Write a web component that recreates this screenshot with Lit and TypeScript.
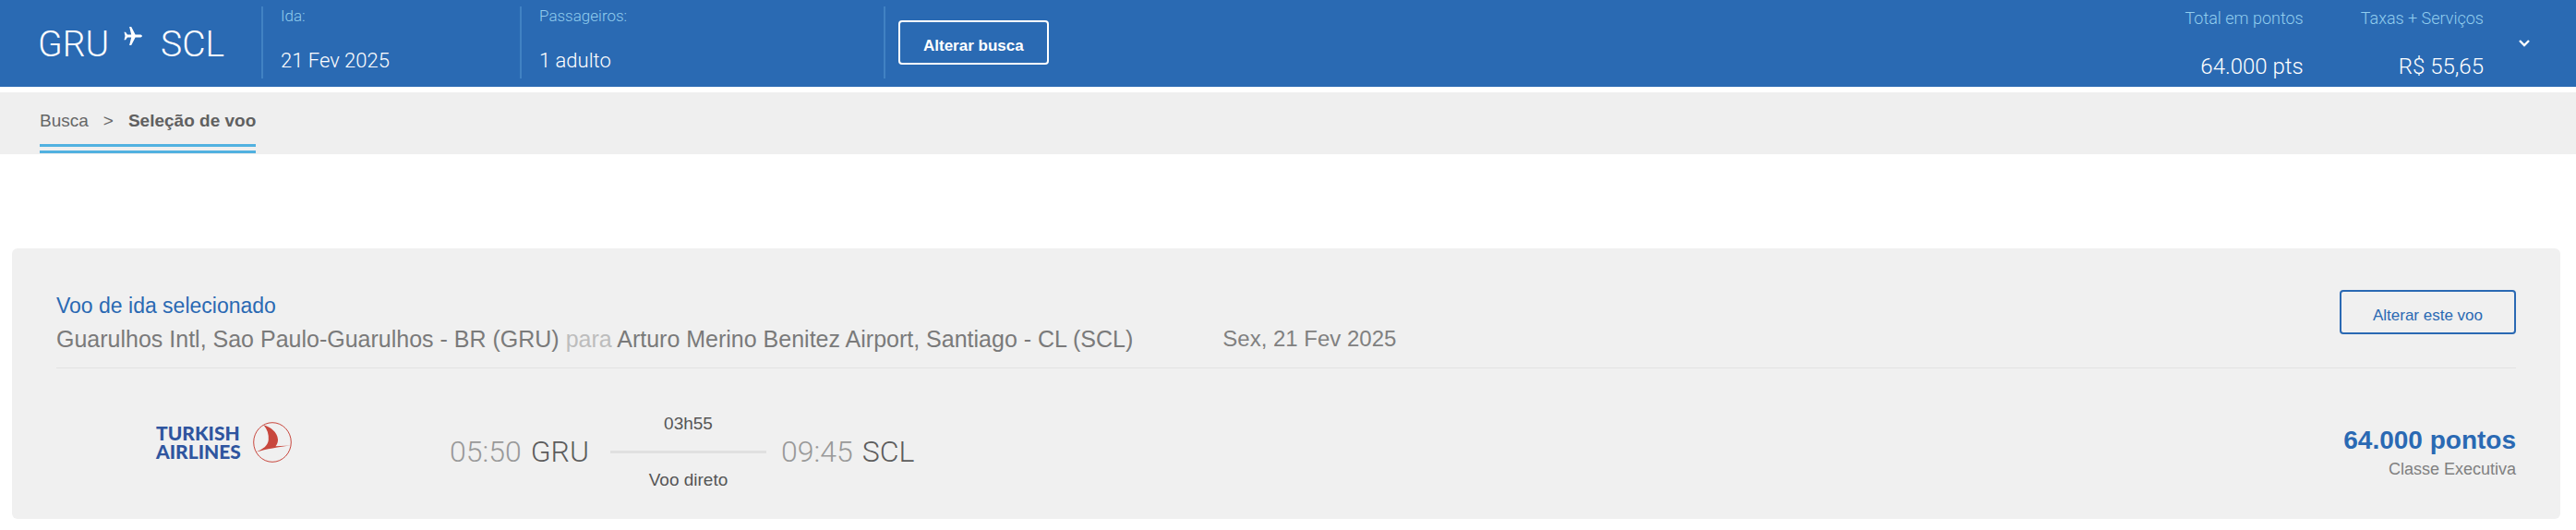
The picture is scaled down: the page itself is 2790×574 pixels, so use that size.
import { LitElement, html, css } from "lit";
import { customElement } from "lit/decorators.js";

const shared = css`
  * { box-sizing: border-box; }
  h1, h2, p, dl, dd, dt, ol { margin: 0; padding: 0; font-weight: inherit; font-size: inherit; }
  button { margin: 0; font-family: inherit; cursor: pointer; }
  .btn {
    height: 48px;
    padding: 8px 25px 0;
    border: 2px solid currentColor;
    border-radius: 4px;
    background: none;
    color: #2a69b3;
    font-size: 17px;
    line-height: 20px;
    white-space: nowrap;
  }
`;

@customElement("search-header")
class SearchHeader extends LitElement {
  static styles = [shared, css`
    :host { display: block; }
    .bar {
      display: flex;
      align-items: flex-start;
      height: 94px;
      padding: 0 46px 0 41px;
      background: #2a6ab3;
      color: #fff;
      font-family: Roboto, "Liberation Sans", sans-serif;
      font-weight: 300;
      white-space: nowrap;
    }
    .route {
      display: flex;
      width: 242px;
      padding-top: 26px;
      font-size: 39px;
      line-height: 44px;
    }
    .plane { width: 20px; height: 20px; margin: 3px 20px 0 16px; }
    .field {
      width: 280px;
      height: 78px;
      margin-top: 7px;
      padding-left: 19px;
      border-left: 2px solid #4182c3;
    }
    .wide { width: 394px; }
    .label { color: #91cdee; font-size: 17px; line-height: 20px; }
    .field .value { margin-top: 27px; font-size: 22px; line-height: 24px; }
    .action {
      flex: 1;
      height: 78px;
      margin-top: 7px;
      padding: 15px 0 0 14px;
      border-left: 2px solid #4182c3;
    }
    .light { color: #fff; font-family: "Liberation Sans", sans-serif; font-weight: 700; }
    .total { padding-top: 10px; margin-left: 62px; text-align: right; }
    .total .label { font-size: 18px; }
    .total .value { margin-top: 28px; font-size: 24px; line-height: 28px; }
    .more { margin: 36px 0 0 34px; padding: 0; border: 0; background: none; color: #fff; width: 20px; height: 20px; }
    .more svg { display: block; }
  `];

  render() {
    return html`
      <header class="bar">
        <h1 class="route">
          <span>GRU</span>
          <svg class="plane" viewBox="0 0 20 20" aria-hidden="true">
            <path fill="#fff" d="M20 10c0-.9-1.200-1.500-2.600-1.500h-4.800L8.200 0H6.100l2.100 8.500H4L2 5.800H.5L1.500 10 .5 14.200H2l2-2.700h4.200L6.100 20h2.100l4.400-8.500h4.800c1.400 0 2.600-.6 2.600-1.500z"/>
          </svg>
          <span>SCL</span>
        </h1>
        <dl class="field"><dt class="label">Ida:</dt><dd class="value">21 Fev 2025</dd></dl>
        <dl class="field wide"><dt class="label">Passageiros:</dt><dd class="value">1 adulto</dd></dl>
        <div class="action"><button class="btn light" type="button">Alterar busca</button></div>
        <dl class="total"><dt class="label">Total em pontos</dt><dd class="value">64.000 pts</dd></dl>
        <dl class="total"><dt class="label">Taxas + Serviços</dt><dd class="value">R$ 55,65</dd></dl>
        <button class="more" type="button" aria-label="Detalhes">
          <svg width="20" height="20" viewBox="0 0 20 20"><path d="M5 8l5 5 5-5" fill="none" stroke="currentColor" stroke-width="2.400"/></svg>
        </button>
      </header>
    `;
  }
}

@customElement("bread-crumb")
class BreadCrumb extends LitElement {
  static styles = [shared, css`
    :host { display: block; }
    .crumbs { display: flex; height: 67px; padding-left: 43px; background: #efefef; }
    .list {
      display: flex;
      gap: 16px;
      height: 66px;
      padding-top: 20px;
      border-bottom: 10px double #51b1e0;
      color: #666;
      font-size: 19px;
      line-height: 22px;
      list-style: none;
    }
    .link { color: inherit; text-decoration: none; }
    .current { font-weight: 700; color: #606060; }
  `];

  render() {
    return html`
      <nav class="crumbs" aria-label="Etapas">
        <ol class="list">
          <li><a class="link" href="#busca">Busca</a></li>
          <li aria-hidden="true">&gt;</li>
          <li class="current" aria-current="page">Seleção de voo</li>
        </ol>
      </nav>
    `;
  }
}

@customElement("airline-logo")
class AirlineLogo extends LitElement {
  static styles = css`
    :host { display: flex; align-items: flex-start; gap: 13px; }
    .name {
      padding-top: 2px;
      color: #2f559f;
      font-family: Lato, "Liberation Sans", sans-serif;
      font-size: 21px;
      font-weight: 900;
      line-height: 20px;
    }
    .line { display: block; }
    .mark { width: 42px; height: 44px; }
  `;

  render() {
    return html`
      <span class="name"><span class="line">TURKISH</span><span class="line">AIRLINES</span></span>
      <svg class="mark" viewBox="0 0 42 44" aria-hidden="true">
        <ellipse cx="21" cy="22" rx="20.300" ry="21.300" fill="none" stroke="#c8473d" stroke-width="1"/>
        <path fill="#c8473d" d="M11.500 3.300C19 5.500 26.500 11 27 19c.1 3-1 5.500-2.500 7.200L41 25.500C28 27 14 29.500 3.500 32.500 11 29 16 26 16.800 19.500 17.300 13.500 15.500 8 11.500 3.300z"/>
      </svg>
    `;
  }
}

@customElement("flight-card")
class FlightCard extends LitElement {
  static styles = [shared, css`
    :host { display: block; margin: 102px 17px 12px 13px; }
    .card { padding: 45px 48px 39px; border-radius: 6px; background: #f0f0f0; }
    .top {
      display: flex;
      align-items: flex-start;
      height: 85px;
      border-bottom: 1px solid #e3e3e3;
    }
    .top .btn { padding-right: 34px; padding-left: 34px; }
    .title { color: #2a69b3; font-size: 23px; line-height: 32px; }
    .info { flex: 1; padding-top: 1px; }
    .places { display: flex; gap: 97px; color: #7a7a7a; font-size: 25px; line-height: 40px; }
    .date { color: #808080; font-size: 24px; }
    .to { color: #bdbdbd; }
    .flight { display: flex; align-items: flex-start; padding-top: 56px; }
    .logo { width: 426px; padding: 2px 0 0 108px; }
    .leg {
      display: flex;
      align-items: center;
      gap: 10px;
      height: 68px;
      color: #5c5c5c;
      font-family: Roboto, "Liberation Sans", sans-serif;
      font-size: 32px;
      font-weight: 300;
      line-height: 36px;
    }
    .time { color: #999; }
    .path {
      width: 169px;
      margin: 0 6px 0 13px;
      color: #555;
      font-family: "Liberation Sans", sans-serif;
      font-size: 19px;
      font-weight: 400;
      line-height: 20px;
      text-align: center;
    }
    .rule { height: 3px; margin: 19px 0; background: #e0e0e0; }
    .price { margin-left: auto; padding-top: 6px; text-align: right; }
    .points { color: #2a69b3; font-size: 28px; font-weight: 700; line-height: 32px; }
    .cabin { margin-top: 3px; color: #808080; font-size: 18px; line-height: 24px; }
  `];

  render() {
    return html`
      <section class="card">
        <div class="top">
          <div class="info">
            <h2 class="title">Voo de ida selecionado</h2>
            <p class="places">
              <span>Guarulhos Intl, Sao Paulo-Guarulhos - BR (GRU) <span class="to">para</span> Arturo Merino Benitez Airport, Santiago - CL (SCL)</span>
              <span class="date">Sex, 21 Fev 2025</span>
            </p>
          </div>
          <button class="btn" type="button">Alterar este voo</button>
        </div>
        <div class="flight">
          <airline-logo class="logo"></airline-logo>
          <div class="leg">
            <span class="time">05:50</span><span>GRU</span>
            <div class="path"><p>03h55</p><div class="rule"></div><p>Voo direto</p></div>
            <span class="time">09:45</span><span>SCL</span>
          </div>
          <div class="price">
            <p class="points">64.000 pontos</p>
            <p class="cabin">Classe Executiva</p>
          </div>
        </div>
      </section>
    `;
  }
}

@customElement("app-root")
class AppRoot extends LitElement {
  static styles = css`
    :host { display: block; background: #fff; font-family: "Liberation Sans", Arial, sans-serif; }
    .crumbs { margin-top: 6px; }
  `;

  render() {
    return html`
      <search-header></search-header>
      <bread-crumb class="crumbs"></bread-crumb>
      <main><flight-card></flight-card></main>
    `;
  }
}
